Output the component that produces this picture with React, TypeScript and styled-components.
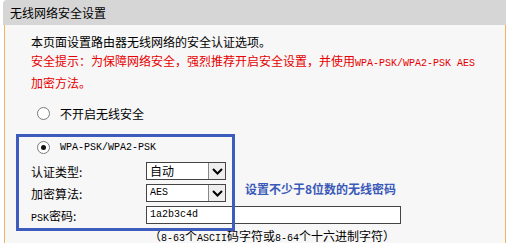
import styled, { createGlobalStyle } from 'styled-components';

const GlobalStyle = createGlobalStyle`
  body {
    margin: 0;
    background: #ffffff;
    font-family: "Noto Sans CJK SC", "Liberation Sans", sans-serif;
    font-size: 12px;
  }
`;

export default function App() {
  return (
    <>
      <GlobalStyle />
      <Panel>
        <Title>无线网络安全设置</Title>
        <Body>
          <Intro>
            本页面设置路由器无线网络的安全认证选项。
            <br />
            <Warn>
              安全提示：为保障网络安全，强烈推荐开启安全设置，并使用
              <Mono>WPA-PSK/WPA2-PSK AES</Mono>
              加密方法。
            </Warn>
          </Intro>
          <RadioRow $top={11}>
            <Radio />
            <span>不开启无线安全</span>
          </RadioRow>
          <RadioRow $top={14} $bottom={3}>
            <Radio $checked />
            <Mono $dark>WPA-PSK/WPA2-PSK</Mono>
          </RadioRow>
          <FieldRow>
            <Label>认证类型:</Label>
            <Select>
              <SelectValue>自动</SelectValue>
              <SelectArrow>
                <Chevron />
              </SelectArrow>
            </Select>
          </FieldRow>
          <FieldRow>
            <Label>加密算法:</Label>
            <Select>
              <SelectValue $mono>AES</SelectValue>
              <SelectArrow>
                <Chevron />
              </SelectArrow>
            </Select>
            <Note>设置不少于8位数的无线密码</Note>
          </FieldRow>
          <FieldRow>
            <Label>
              <Mono $dark>PSK</Mono>密码:
            </Label>
            <TextBox>1a2b3c4d</TextBox>
          </FieldRow>
          <Hint>
            （<Mono $dark>8-63</Mono>个<Mono $dark>ASCII</Mono>码字符或
            <Mono $dark>8-64</Mono>个十六进制字符）
          </Hint>
          <Highlight />
        </Body>
      </Panel>
    </>
  );
}

function Chevron() {
  return (
    <svg width="11" height="7" viewBox="0 0 11 7">
      <path d="M1 1 L5.5 5.5 L10 1" fill="none" stroke="#000" strokeWidth="2" />
    </svg>
  );
}

const Panel = styled.div`
  margin-left: 3px;
  width: 503px;
  height: 243px;
  overflow: hidden;
`;

const Title = styled.div`
  height: 25px;
  line-height: 25px;
  padding-left: 7px;
  background: #d6d6d6;
  border-top-left-radius: 4px;
  color: #000;
  font-size: 12px;
`;

const Body = styled.div`
  position: relative;
  margin-left: 1px;
  height: 218px;
  box-sizing: border-box;
  border-left: 1px solid #f0b463;
  border-right: 1px solid #f0b463;
  background: #f7f7f7;
  padding: 7px 0 0 26px;
`;

const Intro = styled.div`
  width: 450px;
  line-height: 19px;
  color: #000;
`;

const Warn = styled.span`
  color: #e60000;
`;

const Mono = styled.span<{ $dark?: boolean }>`
  font-family: "Liberation Mono", "DejaVu Sans Mono", monospace;
  font-size: 10px;
  color: ${(p) => (p.$dark ? '#000' : 'inherit')};
`;

const RadioRow = styled.div<{ $top: number; $bottom?: number }>`
  display: flex;
  align-items: center;
  gap: 10px;
  height: 20px;
  margin-top: ${(p) => p.$top}px;
  margin-bottom: ${(p) => p.$bottom ?? 0}px;
  padding-left: 6px;
`;

const Radio = styled.span<{ $checked?: boolean }>`
  position: relative;
  width: 11px;
  height: 11px;
  border-radius: 50%;
  border: 1px solid #7a7a7a;
  background: #fff;
  &::after {
    content: '';
    display: ${(p) => (p.$checked ? 'block' : 'none')};
    position: absolute;
    left: 3px;
    top: 3px;
    width: 5px;
    height: 5px;
    border-radius: 50%;
    background: #111;
  }
`;

const FieldRow = styled.div`
  display: flex;
  align-items: center;
  height: 22px;
`;

const Label = styled.div`
  width: 115px;
  color: #000;
`;

const Select = styled.div`
  display: flex;
  width: 78px;
  height: 16px;
  border: 1px solid #444;
  background: #fff;
`;

const SelectValue = styled.div<{ $mono?: boolean }>`
  flex: 1;
  padding-left: 3px;
  line-height: 16px;
  font-family: ${(p) =>
    p.$mono ? '"Liberation Mono", monospace' : '"Noto Sans CJK SC", sans-serif'};
  font-size: ${(p) => (p.$mono ? '10px' : '12px')};
`;

const SelectArrow = styled.div`
  width: 16px;
  display: flex;
  align-items: center;
  justify-content: center;
  background: #eeeeee;
  border-left: 1px solid #888;
`;

const Note = styled.div`
  margin-left: 19px;
  margin-top: -10px;
  color: #3a59b8;
  font-weight: bold;
`;

const TextBox = styled.div`
  width: 250px;
  height: 16px;
  line-height: 16px;
  padding-left: 3px;
  border: 1px solid #444;
  background: #fff;
  font-family: "Liberation Mono", monospace;
  font-size: 10px;
`;

const Hint = styled.div`
  padding-left: 118px;
  line-height: 20px;
  color: #000;
`;

const Highlight = styled.div`
  position: absolute;
  left: 11px;
  top: 109px;
  width: 213px;
  height: 91px;
  border: 3px solid #3d5cbd;
  pointer-events: none;
`;
